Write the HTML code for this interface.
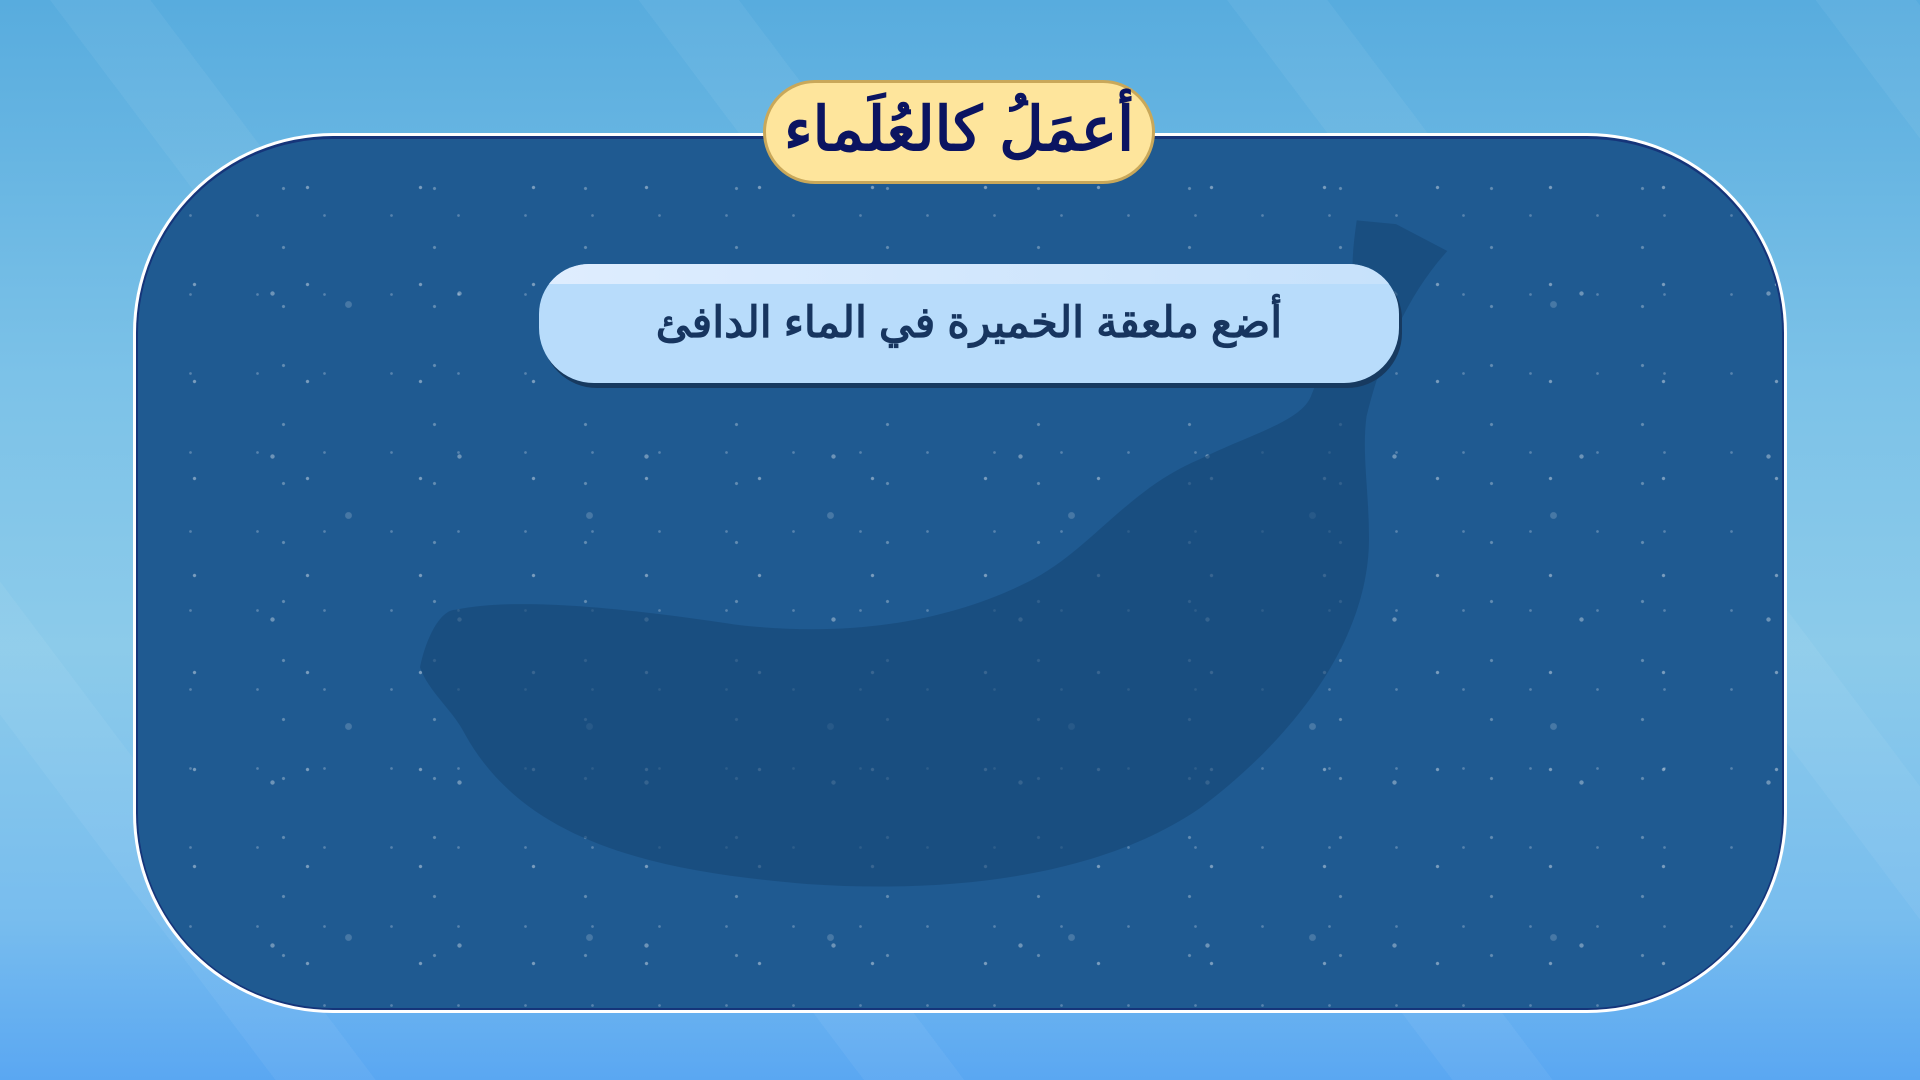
<!DOCTYPE html>
<html><head><meta charset="utf-8"><style>
html,body{margin:0;padding:0;width:1920px;height:1080px;overflow:hidden}
body{position:relative;background:linear-gradient(180deg,#58acde 0%,#7cc2e8 35%,#8ccbea 60%,#78bdee 85%,#5aa7f2 100%)}
.streaks{position:absolute;inset:0;background:
 repeating-linear-gradient(53deg,rgba(255,255,255,0) 0 220px,rgba(255,255,255,.05) 220px 300px,rgba(255,255,255,0) 300px 470px)}
.panel{position:absolute;left:133px;top:133px;width:1654px;height:880px;border-radius:200px;background:#fff}
.panel .in{position:absolute;left:3px;top:3px;right:3px;bottom:3px;border-radius:197px;background:#15357a}
.panel .in2{position:absolute;left:5px;top:6px;right:5px;bottom:5px;border-radius:194px;background:#1f5a91;overflow:hidden;
 background-image:
 radial-gradient(circle,rgba(255,255,255,.4) 1.3px,transparent 2px),
 radial-gradient(circle,rgba(255,255,255,.35) 1.8px,transparent 2.5px),
 radial-gradient(circle,rgba(255,255,255,.25) 1px,transparent 1.7px),
 radial-gradient(circle,rgba(255,255,255,.18) 3px,transparent 3.8px),
 radial-gradient(circle,rgba(255,255,255,.3) 1.2px,transparent 1.9px);
 background-size:113px 97px,187px 163px,67px 79px,241px 211px,151px 59px;
 background-position:0 0,41px 73px,19px 37px,90px 60px,70px 20px}
svg.ban{position:absolute;left:0;top:0}
.title{position:absolute;left:763px;top:80px;width:392px;height:104px;box-sizing:border-box;border:3px solid #c9a85a;border-radius:52px;background:#fee59c;
 font-family:"Liberation Sans","Noto Sans CJK SC",sans-serif;font-weight:900;font-size:61px;color:#0b1461;text-align:center;line-height:92px;direction:rtl}
.banner{position:absolute;left:539px;top:264px;width:860px;height:119px;box-sizing:border-box;border-radius:50px 50px 55px 55px;background:#b8dcfb;
 box-shadow:3px 5px 0 #173a60;overflow:hidden;
 font-family:"Liberation Sans","Noto Sans CJK SC",sans-serif;font-weight:700;font-size:43px;color:#17355f;text-align:center;line-height:118px;direction:rtl}
.banner:before{content:"";position:absolute;left:0;top:0;right:0;height:20px;background:linear-gradient(90deg,#e3efff,#c8e2fb);opacity:.9}
.banner span{position:relative}
</style></head><body>
<div class="streaks"></div>
<div class="panel"><div class="in"></div><div class="in2"></div></div>
<svg class="ban" width="1920" height="1080" viewBox="0 0 1568 882">
<path d="M1108,180 L1140,183 L1182,205 C1150,240 1128,290 1116,340 C1112,370 1118,400 1118,440 C1118,520 1060,600 980,660 C900,715 780,730 660,722 C540,712 430,690 380,600 C370,580 350,565 343,545 C348,520 360,498 372,498 C420,488 500,495 600,510 C700,522 780,505 840,475 C890,450 920,400 980,375 C1020,355 1060,345 1070,325 C1080,300 1098,260 1108,240 C1102,230 1105,200 1108,180 Z" fill="#174878" opacity=".65"/>
</svg>
<div class="banner"><span>أضع ملعقة الخميرة في الماء الدافئ</span></div>
<div class="title">أعمَلُ كالعُلَماء</div>
</body></html>
